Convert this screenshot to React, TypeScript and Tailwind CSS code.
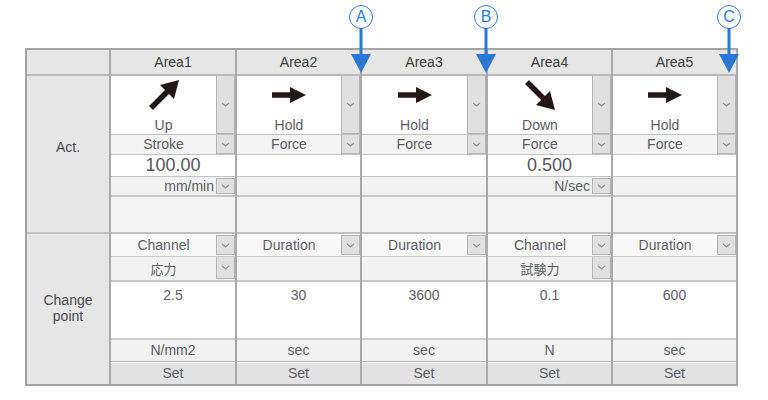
type Area = {
  name: string;
  dir: "up" | "right" | "down";
  label: string;
  mode: string;
  value: string;
  unit: string;
  cond: string;
  channel: string;
  point: string;
  pointUnit: string;
  width: string;
};

const areas: Area[] = [
  { name: "Area1", dir: "up", label: "Up", mode: "Stroke", value: "100.00", unit: "mm/min", cond: "Channel", channel: "応力", point: "2.5", pointUnit: "N/mm2", width: "w-[126px]" },
  { name: "Area2", dir: "right", label: "Hold", mode: "Force", value: "", unit: "", cond: "Duration", channel: "", point: "30", pointUnit: "sec", width: "w-[125px]" },
  { name: "Area3", dir: "right", label: "Hold", mode: "Force", value: "", unit: "", cond: "Duration", channel: "", point: "3600", pointUnit: "sec", width: "w-[126px]" },
  { name: "Area4", dir: "down", label: "Down", mode: "Force", value: "0.500", unit: "N/sec", cond: "Channel", channel: "試験力", point: "0.1", pointUnit: "N", width: "w-[125px]" },
  { name: "Area5", dir: "right", label: "Hold", mode: "Force", value: "", unit: "", cond: "Duration", channel: "", point: "600", pointUnit: "sec", width: "w-[125px]" },
];

const markers = [
  { letter: "A", left: "left-[349px]" },
  { letter: "B", left: "left-[474px]" },
  { letter: "C", left: "left-[717px]" },
];

function Chevron() {
  return (
    <svg width="9" height="5" viewBox="0 0 9 5" fill="none">
      <polyline points="1,1 4.5,4 8,1" stroke="#939393" strokeWidth="1.1" />
    </svg>
  );
}

function DropButton({ className = "" }: { className?: string }) {
  return (
    <div className={`flex w-[19px] shrink-0 items-center justify-center border border-[#b4b4b4] bg-[#e0e0e0] ${className}`}>
      <Chevron />
    </div>
  );
}

// act direction arrow drawn in the cell
function ActArrow({ dir }: { dir: Area["dir"] }) {
  if (dir === "right") {
    return (
      <svg width="36" height="16" viewBox="0 0 36 16">
        <line x1="1" y1="8" x2="22" y2="8" stroke="#231815" strokeWidth="5.5" />
        <polygon points="35,8 19,0 19,16" fill="#231815" />
      </svg>
    );
  }
  const rotate = dir === "up" ? "" : "rotate(90 16 16)";
  return (
    <svg width="32" height="32" viewBox="0 0 32 32">
      <g transform={rotate}>
        <line x1="3" y1="29" x2="21" y2="11" stroke="#231815" strokeWidth="5.5" />
        <polygon points="31,1 12,6 26,20" fill="#231815" />
      </g>
    </svg>
  );
}

function AreaColumn({ area }: { area: Area }) {
  return (
    <div className={`flex ${area.width} flex-col border-r-2 border-[#a9a9a9]`}>
      <div className="flex h-[26px] items-center justify-center border-b-2 border-[#b9b9b9] bg-[#e6e6e6] text-[14px] text-[#3c3c3c]">
        {area.name}
      </div>

      <div className="flex h-[59px] border-b border-[#c2c2c2] bg-white">
        <div className="flex flex-1 flex-col items-center pt-[2px]">
          <div className="flex h-[34px] items-center">
            <ActArrow dir={area.dir} />
          </div>
          <span className="mt-[5px] text-[14px] leading-4 text-[#5c5c68]">{area.label}</span>
        </div>
        <DropButton className="border-t-0" />
      </div>

      <div className="flex h-[20px] border-b border-[#c2c2c2] bg-[#f4f4f4]">
        <div className="flex flex-1 items-center justify-center text-[14px] text-[#5c5c68]">{area.mode}</div>
        <DropButton className="border-t-0" />
      </div>

      <div className="flex h-[22px] items-center justify-center border-b border-[#c2c2c2] bg-white text-[18px] text-[#55555f]">
        {area.value}
      </div>

      <div className="flex h-[20px] border-b-2 border-[#c6c6c6] bg-[#f2f2f2]">
        {area.unit && (
          <>
            <div className="flex flex-1 items-center justify-end pr-[2px] text-[14px] text-[#5c5c68]">{area.unit}</div>
            <DropButton className="my-[1px] w-[17px]" />
          </>
        )}
      </div>

      <div className="h-[37px] border-b-2 border-[#c2c2c2] bg-[#f3f3f3]" />

      <div className="flex h-[23px] border-b border-[#c8c8c8] bg-[#f8f8f8]">
        <div className="flex flex-1 items-center justify-center text-[14px] text-[#5c5c68]">{area.cond}</div>
        <DropButton className="my-[1px]" />
      </div>

      <div className="flex h-[25px] border-b-2 border-[#c6c6c6] bg-[#f2f2f2]">
        {area.channel && (
          <>
            <div className="flex flex-1 items-center justify-center text-[13px] text-[#5c5c68] [font-family:'Noto_Sans_CJK_JP',sans-serif]">
              {area.channel}
            </div>
            <DropButton className="mb-[1px] border-t-0" />
          </>
        )}
      </div>

      <div className="flex h-[58px] justify-center border-b-2 border-[#cacaca] bg-white pt-[3px] text-[14px] text-[#5c5c68]">
        {area.point}
      </div>

      <div className="flex h-[22px] items-center justify-center border-b border-[#b8b8b8] bg-[#f2f2f2] text-[14px] text-[#5c5c68]">
        {area.pointUnit}
      </div>

      <div className="flex h-[22px] items-center justify-center border-t border-white bg-[#e2e2e2] text-[14px] text-[#5c5c68]">
        Set
      </div>
    </div>
  );
}

function Marker({ letter, left }: { letter: string; left: string }) {
  return (
    <div className={`absolute top-[5px] ${left} flex w-[24px] flex-col items-center`}>
      <div className="flex h-[24px] w-[24px] items-center justify-center rounded-full border border-[#2c7be0] bg-white text-[16px] leading-none text-[#2c7be0]">
        {letter}
      </div>
      <svg width="22" height="46" viewBox="0 0 22 46" className="-mt-[1px]">
        <line x1="11" y1="0" x2="11" y2="28" stroke="#2a77d4" strokeWidth="3" />
        <polygon points="1,26 21,26 11,45" fill="#2a77d4" />
      </svg>
    </div>
  );
}

export default function App() {
  return (
    <div className="relative h-[400px] w-[768px] overflow-hidden bg-white [font-family:'Liberation_Sans',Arial,sans-serif]">
      <div className="ml-[25px] mt-[48px] flex w-fit border-y-2 border-l-2 border-[#a4a4a4]">
        <div className="flex w-[84px] flex-col border-r-2 border-[#a9a9a9] bg-[#e6e6e6] text-[14px] text-[#4a4a50]">
          <div className="h-[26px] border-b-2 border-[#b9b9b9]" />
          <div className="flex h-[158px] items-center justify-center border-b-2 border-[#c0c0c0] pb-[14px]">Act.</div>
          <div className="flex h-[148px] flex-col items-center justify-center leading-4">
            <span>Change</span>
            <span>point</span>
          </div>
        </div>
        {areas.map((area) => (
          <AreaColumn key={area.name} area={area} />
        ))}
      </div>

      {markers.map((m) => (
        <Marker key={m.letter} letter={m.letter} left={m.left} />
      ))}
    </div>
  );
}
